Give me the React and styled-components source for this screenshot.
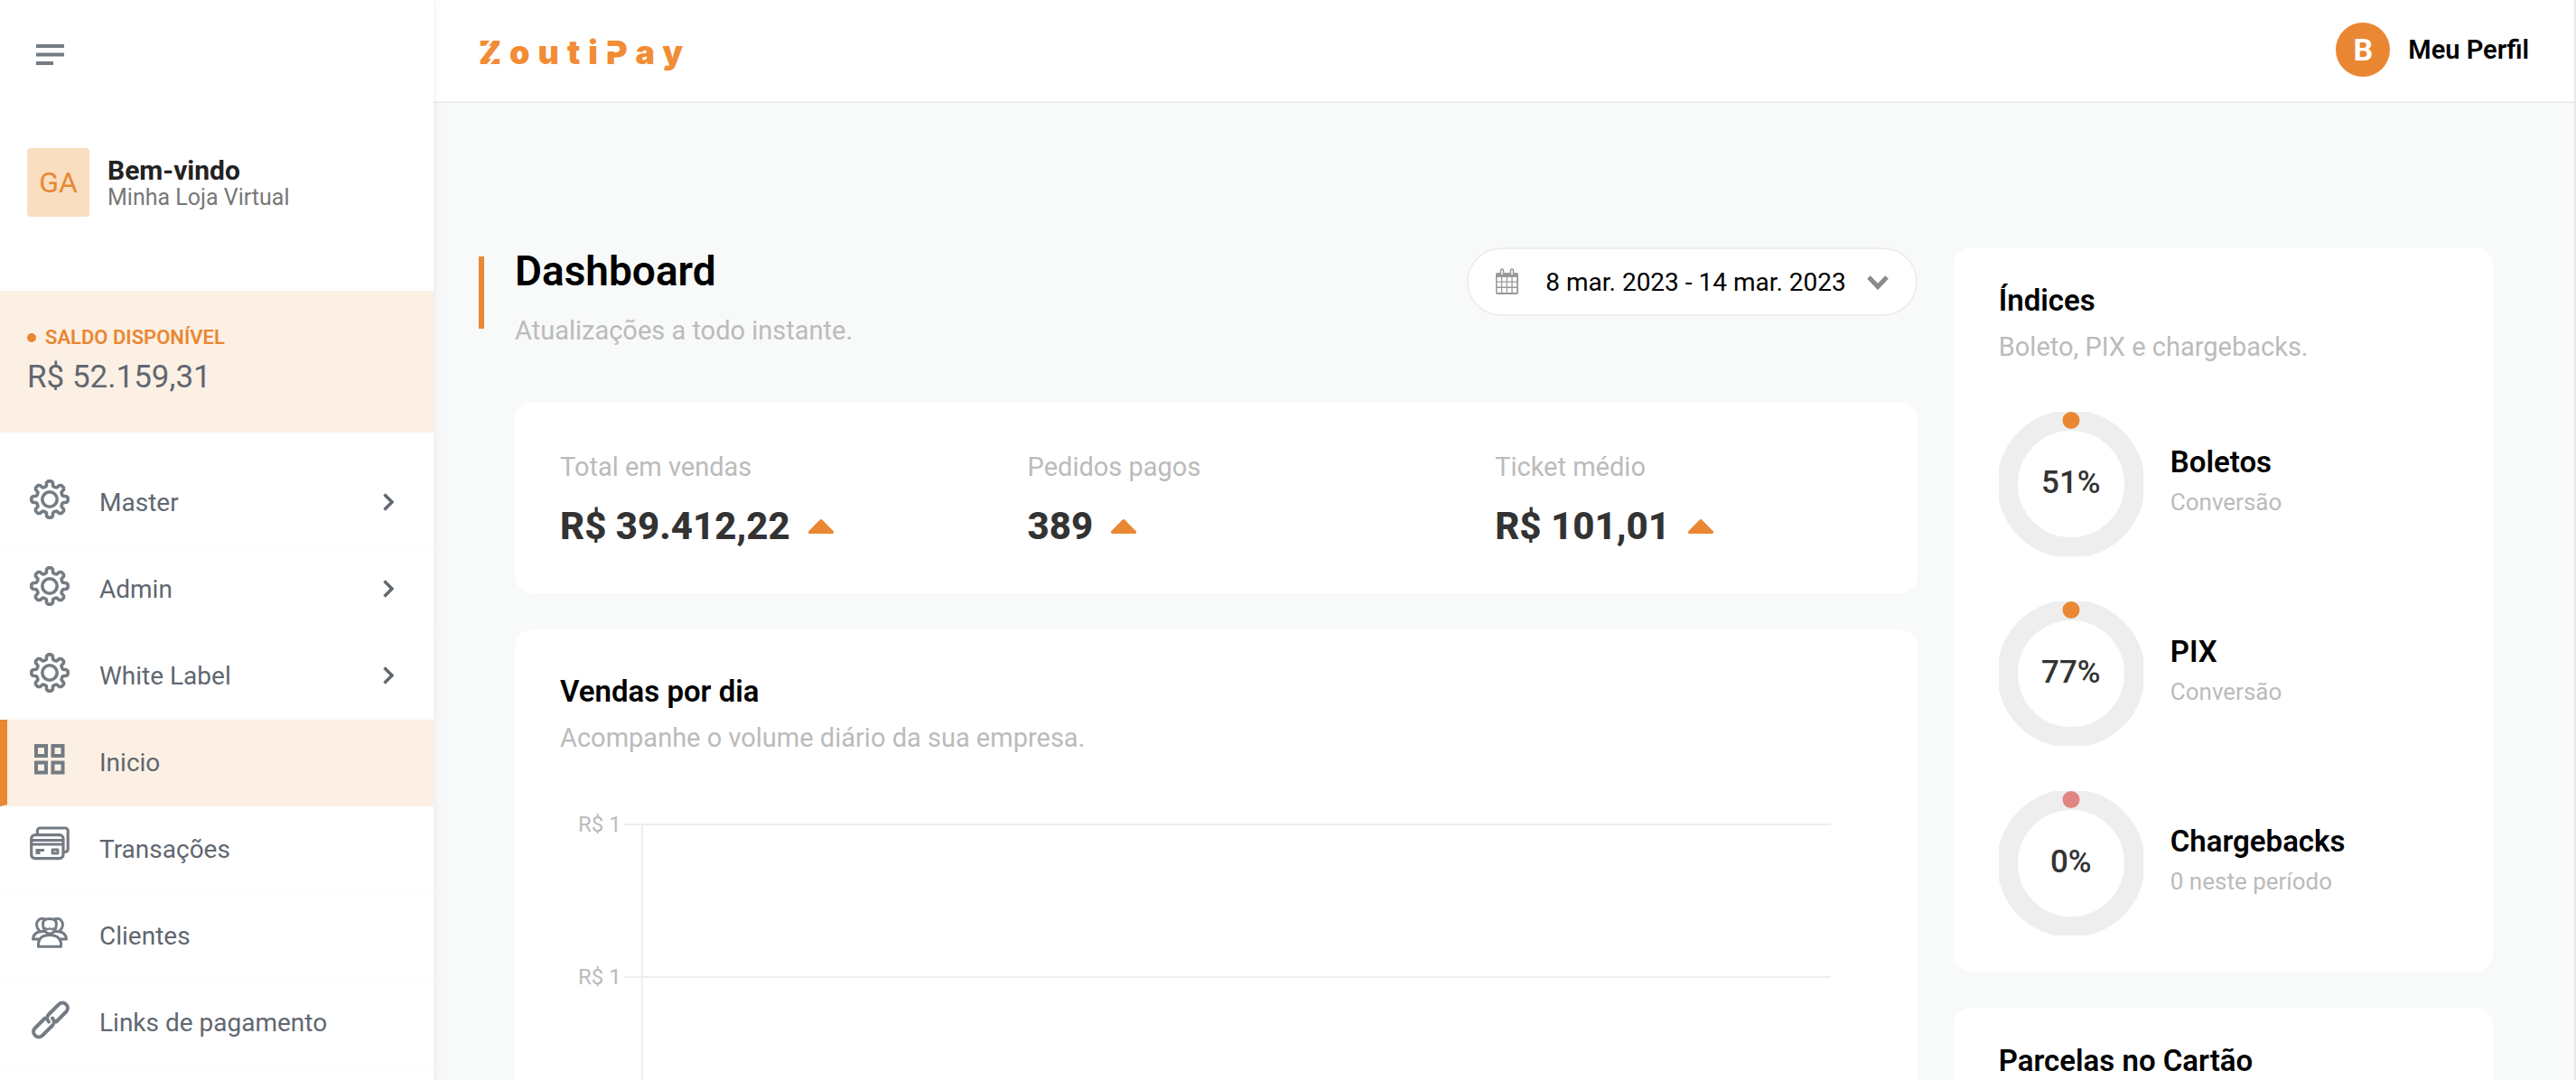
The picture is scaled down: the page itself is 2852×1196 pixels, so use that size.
import React from "react";
import styled, { createGlobalStyle } from "styled-components";

const orange = "#e98733";
const slate = "#606770";
const muted = "#bbbbbb";
const line = "#eeeeee";

const GlobalStyle = createGlobalStyle`
  *, *::before, *::after { box-sizing: border-box; }
  body { margin: 0; background: #f8faf9; color: #000; font-family: Roboto, "Liberation Sans", sans-serif; }
  h1, h2, h3, p, ul, dl, dd { margin: 0; padding: 0; font-weight: 400; }
  ul { list-style: none; }
  a { color: inherit; text-decoration: none; }
  button { font: inherit; color: inherit; border: 0; padding: 0; background: none; cursor: pointer; }
  svg { display: block; flex: none; }
`;

const Shell = styled.div`
  display: grid;
  grid-template-columns: 480px minmax(0, 1fr);
  height: 100vh;
  overflow: hidden;
  border-right: 2px solid #e8e8e8;
`;

/* Sidebar */

const Sidebar = styled.aside`
  z-index: 1;
  background: #fff;
  box-shadow: 0 0 10px rgba(0, 0, 0, 0.08);
`;

const SidebarTop = styled.div`
  display: flex;
  align-items: center;
  height: 120px;
  padding: 0 40px;
`;

const User = styled.div`
  display: flex;
  align-items: center;
  gap: 20px;
  padding: 44px 30px 82px;
`;

const UserBadge = styled.div`
  display: grid;
  place-items: center;
  width: 69px;
  height: 76px;
  border-radius: 4px;
  background: #f9dec1;
  color: ${orange};
  font-size: 32px;
`;

const UserText = styled.div`
  padding-top: 4px;
  line-height: 30px;
`;

const UserGreeting = styled.p`
  color: #222;
  font-size: 30px;
  font-weight: 700;
`;

const UserStore = styled.p`
  color: #777;
  font-size: 25px;
`;

const Balance = styled.div`
  padding: 40px 30px 39px;
  background: #fcf0e4;
`;

const BalanceLabel = styled.p`
  display: flex;
  align-items: center;
  gap: 10px;
  margin-bottom: 10px;
  color: ${orange};
  font-size: 22px;
  font-weight: 600;
  line-height: 24px;

  &::before {
    content: "";
    width: 10px;
    height: 10px;
    border-radius: 50%;
    background: ${orange};
  }
`;

const BalanceValue = styled.p`
  color: ${slate};
  font-size: 35px;
  line-height: 44px;
`;

const Menu = styled.ul`
  padding-top: 30px;
`;

const MenuLink = styled.a`
  display: flex;
  align-items: center;
  height: 96px;
  padding: 0 44px 0 ${(p) => (p.$active ? "25px" : "33px")};
  border-left: ${(p) => (p.$active ? `8px solid ${orange}` : "0")};
  border-bottom: 2px solid ${(p) => (p.$active ? "#fcf0e4" : "#fdfdfd")};
  background: ${(p) => (p.$active ? "#fcf0e4" : "#fff")};
  color: ${slate};
  font-size: 28px;
`;

const MenuIcon = styled.span`
  width: 44px;
  margin-right: 33px;
  padding-bottom: 6px;
  color: #747b83;
`;

const MenuLabel = styled.span`
  flex: 1;
`;

/* Header */

const Page = styled.div`
  display: flex;
  flex-direction: column;
  min-width: 0;
`;

const Header = styled.header`
  display: flex;
  align-items: center;
  justify-content: space-between;
  flex: none;
  height: 114px;
  padding: 0 50px 2px;
  border-bottom: 2px solid ${line};
  background: #fff;
`;

const Logo = styled.a`
  padding-top: 6px;
  color: #f28c35;
  font-family: Inter, sans-serif;
  font-size: 36px;
  font-weight: 900;
  letter-spacing: 9px;
`;

const LogoLetter = styled.span`
  position: relative;

  &::before,
  &::after {
    content: "";
    position: absolute;
    background: #fff;
  }
`;

const LogoZ = styled(LogoLetter)`
  &::before,
  &::after {
    width: 12px;
    height: 3px;
    transform: rotate(-50deg);
  }
  &::before { left: 6px; top: 10px; }
  &::after { left: 7px; bottom: 10px; }
`;

const LogoP = styled(LogoLetter)`
  &::before { left: 0; top: 15px; width: 10px; height: 6px; }
`;

const Profile = styled.a`
  display: flex;
  align-items: center;
  gap: 20px;
  font-size: 29px;
  font-weight: 600;
`;

const ProfileBadge = styled.span`
  display: grid;
  place-items: center;
  width: 60px;
  height: 60px;
  border-radius: 50%;
  background: ${orange};
  color: #fff;
  font-size: 34px;
  font-weight: 700;
`;

/* Content */

const Content = styled.main`
  display: grid;
  grid-template-columns: minmax(0, 13fr) minmax(0, 5fr);
  align-items: start;
  gap: 40px;
  padding: 160px 90px 90px;
`;

const Column = styled.div`
  display: grid;
  gap: 40px;
`;

const Heading = styled.div`
  display: flex;
  align-items: flex-start;
  gap: 34px;
  margin: 0 0 23px -40px;
`;

const HeadingBar = styled.div`
  width: 6px;
  height: 80px;
  margin-top: 10px;
  background: ${orange};
`;

const HeadingText = styled.div`
  display: grid;
  gap: 23px;
  flex: 1;
`;

const Title = styled.h1`
  font-size: 46px;
  font-weight: 600;
  line-height: 52px;
`;

const Subtitle = styled.p`
  color: ${muted};
  font-size: 29px;
  line-height: 34px;
`;

const DateButton = styled.button`
  display: flex;
  align-items: center;
  height: 76px;
  padding: 0 30px;
  border: 2px solid ${line};
  border-radius: 38px;
  background: #fff;
  color: #000;
  font-size: 28px;
`;

const DateText = styled.span`
  padding: 0 23px 0 30px;
`;

const Card = styled.section`
  padding: ${(p) => p.$pad || "40px 50px"};
  border-radius: 20px;
  background: #fff;
`;

const Stats = styled.dl`
  display: grid;
  grid-template-columns: repeat(3, minmax(0, 1fr));
`;

const Stat = styled.div`
  display: grid;
  gap: 24px;
  padding: 0 50px;
`;

const StatLabel = styled.dt`
  color: ${muted};
  font-size: 29px;
  line-height: 34px;
`;

const StatValue = styled.dd`
  display: flex;
  align-items: center;
  gap: 20px;
  color: #333;
  font-size: 42px;
  font-weight: 800;
  line-height: 50px;
`;

const CardHead = styled.div`
  display: grid;
  gap: 15px;
  margin-bottom: ${(p) => p.$gap || "55px"};
`;

const CardTitle = styled.h2`
  font-size: 33px;
  font-weight: 600;
  line-height: 38px;
`;

const Chart = styled.div`
  padding: 14px 46px 0 20px;
`;

const ChartRow = styled.div`
  display: grid;
  grid-template-columns: 48px 22px 1fr;
  height: 169px;
`;

const ChartLabel = styled.span`
  margin-top: -14px;
  color: ${muted};
  font-size: 24px;
  line-height: 30px;
  white-space: nowrap;
`;

const ChartTick = styled.span`
  margin-left: 3px;
  border-top: 2px solid ${line};
`;

const ChartBand = styled.span`
  border-top: 2px solid ${line};
  border-left: 2px solid ${line};
`;

const RateList = styled.ul`
  display: grid;
  gap: 50px;
`;

const RateItem = styled.li`
  display: flex;
  align-items: center;
  gap: 30px;
`;

const RateRing = styled.div`
  display: grid;
  place-items: center;

  > * { grid-area: 1 / 1; }
`;

const RateValue = styled.span`
  padding-bottom: 4px;
  color: #333;
  font-size: 35px;
  font-weight: 500;
`;

const RateText = styled.div`
  display: grid;
  gap: 10px;
  padding-bottom: 8px;
`;

const RateName = styled.h3`
  font-size: 33px;
  font-weight: 600;
  line-height: 38px;
`;

const RateNote = styled.p`
  color: ${muted};
  font-size: 26px;
  line-height: 30px;
`;

/* Icons */

const gearPath = () => {
  const points = [];
  const add = (deg, r) => {
    const a = (deg * Math.PI) / 180;
    points.push(`${(22 + r * Math.cos(a)).toFixed(2)} ${(22 + r * Math.sin(a)).toFixed(2)}`);
  };
  for (let i = 0; i < 8; i += 1) {
    const c = i * 45 - 90;
    add(c - 14, 15.2);
    add(c - 10, 19);
    add(c - 5, 20.2);
    add(c + 5, 20.2);
    add(c + 10, 19);
    add(c + 14, 15.2);
    add(c + 22.5, 14.6);
  }
  return `M${points.join("L")}Z`;
};

const Svg44 = ({ children }) => (
  <svg width="44" height="44" viewBox="0 0 44 44" fill="none" stroke="currentColor" strokeLinejoin="round" strokeLinecap="round" aria-hidden="true">
    {children}
  </svg>
);

const GearIcon = () => (
  <Svg44>
    <path d={gearPath()} strokeWidth="3.6" />
    <circle cx="22" cy="22" r="8.2" strokeWidth="3.6" />
  </Svg44>
);

const GridIcon = () => (
  <Svg44>
    <g strokeWidth="4" strokeLinejoin="miter">
      <rect x="7" y="7" width="11" height="11" />
      <rect x="25.500" y="7" width="11" height="11" />
      <rect x="7" y="25.500" width="11" height="11" />
      <rect x="25.500" y="25.500" width="11" height="11" />
    </g>
  </Svg44>
);

const CardsIcon = () => (
  <Svg44>
    <g strokeWidth="3.2">
      <path d="M8.4 9V5a3 3 0 0 1 3-3H39.2a3 3 0 0 1 3 3V25.500a3 3 0 0 1-3 3H38" />
      <rect x="1.7" y="9.600" width="35.300" height="26" rx="4" />
      <path d="M2 15.500h34.500M2 20h34.500" strokeWidth="2.800" />
      <path d="M6.500 26.500h9.500M6.500 29.500h5" strokeWidth="2.800" strokeLinecap="butt" />
      <rect x="25" y="26" width="6" height="4" strokeWidth="2.800" />
    </g>
  </Svg44>
);

const PeopleIcon = () => (
  <Svg44>
    <g strokeWidth="3">
      <path d="M14.500 12c0-4 3-5.500 7.500-5.500s7.500 1.500 7.500 5.500c0 6-3.500 11-7.500 11s-7.500-5-7.500-11Z" />
      <path d="M18 17c1 1.800 2.500 1.200 4 0 1.500 1.200 3 1.800 4 0" strokeWidth="2.200" />
      <path d="M10 7.500C11.500 6 15 6.300 17 7M10 7.500c-4 4-2.500 9 1 12.500M34 7.500C32.500 6 29 6.300 27 7M34 7.500c4 4 2.500 9-1 12.500" />
      <path d="M16 20.500c-8-.5-12 2-12.500 8.500H10M28 20.500c8-.5 12 2 12.500 8.500H34" />
      <path d="M9.500 37.200v-4c1-6.200 6-8.700 12.500-8.700s11.500 2.500 12.500 8.700v4Z" />
    </g>
  </Svg44>
);

const LinkIcon = () => (
  <Svg44>
    <g strokeWidth="4" transform="rotate(-45 23 22.500)">
      <path d="M20 16.700H4.500a5.800 5.800 0 0 0 0 11.600H20a5.800 5.800 0 0 0 5.800-5.800" />
      <path d="M26 28.300H41.500a5.800 5.800 0 0 0 0-11.600H26a5.800 5.800 0 0 0-5.800 5.800" />
    </g>
  </Svg44>
);

const ChevronRight = () => (
  <svg width="12" height="20" viewBox="0 0 12 20" fill="none" stroke="currentColor" strokeWidth="3.4" aria-hidden="true">
    <path d="M1.500 1.500 10 10l-8.500 8.500" />
  </svg>
);

const ChevronDown = () => (
  <svg width="24" height="17" viewBox="0 0 24 17" fill="none" stroke="#8a8a8a" strokeWidth="5" aria-hidden="true">
    <path d="M2 3l10 10.500L22 3" />
  </svg>
);

const MenuLines = () => (
  <svg width="31" height="24" viewBox="0 0 31 24" fill="none" stroke="#747b83" strokeWidth="4" aria-hidden="true">
    <path d="M0 3h31M0 12.500h31M0 22h19" />
  </svg>
);

const CalendarIcon = () => (
  <svg width="25" height="30" viewBox="0 0 25 30" fill="none" aria-hidden="true">
    <path d="M2 5h21a2 2 0 0 1 2 2v20a2 2 0 0 1-2 2H2a2 2 0 0 1-2-2V7a2 2 0 0 1 2-2Z" fill="#999" />
    <path
      fill="#fff"
      d="M1.500 10h4.500v4.500H1.500zM7.200 10h4.500v4.500H7.200zM12.900 10h4.500v4.500h-4.500zM18.700 10h4.500v4.500h-4.500zM1.500 15.800h4.500v4.800H1.500zM7.200 15.800h4.500v4.800H7.200zM12.900 15.800h4.500v4.800h-4.500zM18.700 15.800h4.500v4.800h-4.500zM1.500 22h4.500v5H1.500zM7.200 22h4.500v5H7.200zM12.900 22h4.500v5h-4.500zM18.700 22h4.500v5h-4.500z"
    />
    <rect x="5.500" y="1" width="3" height="7" rx="1.500" fill="#fff" stroke="#999" strokeWidth="1.500" />
    <rect x="16.500" y="1" width="3" height="7" rx="1.500" fill="#fff" stroke="#999" strokeWidth="1.500" />
  </svg>
);

const UpTriangle = () => (
  <svg width="28" height="16" viewBox="0 0 28 16" aria-hidden="true">
    <path d="M12.800.6a1.800 1.800 0 0 1 2.400 0l12.300 12.400c1 1.200.6 3-1.300 3H1.800C-.1 16-.5 14.200.5 13Z" fill={orange} />
  </svg>
);

const Ring = ({ color }) => (
  <svg width="160" height="160" viewBox="0 0 160 160" aria-hidden="true">
    <circle cx="80" cy="80" r="70.500" fill="none" stroke={line} strokeWidth="23" />
    <circle cx="80" cy="9.500" r="9.500" fill={color} />
  </svg>
);

/* Data */

const menu = [
  { label: "Master", Icon: GearIcon, nested: true },
  { label: "Admin", Icon: GearIcon, nested: true },
  { label: "White Label", Icon: GearIcon, nested: true },
  { label: "Inicio", Icon: GridIcon, active: true },
  { label: "Transações", Icon: CardsIcon },
  { label: "Clientes", Icon: PeopleIcon },
  { label: "Links de pagamento", Icon: LinkIcon },
];

const stats = [
  { label: "Total em vendas", value: "R$ 39.412,22" },
  { label: "Pedidos pagos", value: "389" },
  { label: "Ticket médio", value: "R$ 101,01" },
];

const rates = [
  { name: "Boletos", value: "51%", note: "Conversão", color: orange },
  { name: "PIX", value: "77%", note: "Conversão", color: orange },
  { name: "Chargebacks", value: "0%", note: "0 neste período", color: "#e08582" },
];

const ticks = ["R$ 1", "R$ 1"];

export default function App() {
  return (
    <>
      <GlobalStyle />
      <Shell>
        <Sidebar>
          <SidebarTop>
            <button type="button" aria-label="Menu">
              <MenuLines />
            </button>
          </SidebarTop>
          <User>
            <UserBadge>GA</UserBadge>
            <UserText>
              <UserGreeting>Bem-vindo</UserGreeting>
              <UserStore>Minha Loja Virtual</UserStore>
            </UserText>
          </User>
          <Balance>
            <BalanceLabel>SALDO DISPONÍVEL</BalanceLabel>
            <BalanceValue>R$ 52.159,31</BalanceValue>
          </Balance>
          <nav>
            <Menu>
              {menu.map(({ label, Icon, nested, active }) => (
                <li key={label}>
                  <MenuLink href="#" $active={active} aria-current={active ? "page" : undefined}>
                    <MenuIcon>
                      <Icon />
                    </MenuIcon>
                    <MenuLabel>{label}</MenuLabel>
                    {nested && <ChevronRight />}
                  </MenuLink>
                </li>
              ))}
            </Menu>
          </nav>
        </Sidebar>

        <Page>
          <Header>
            <Logo href="#">
              <LogoZ>Z</LogoZ>outi<LogoP>P</LogoP>ay
            </Logo>
            <Profile href="#">
              <ProfileBadge>B</ProfileBadge>
              Meu Perfil
            </Profile>
          </Header>

          <Content>
            <Column>
              <Heading>
                <HeadingBar />
                <HeadingText>
                  <Title>Dashboard</Title>
                  <Subtitle>Atualizações a todo instante.</Subtitle>
                </HeadingText>
                <DateButton type="button">
                  <CalendarIcon />
                  <DateText>8 mar. 2023 - 14 mar. 2023</DateText>
                  <ChevronDown />
                </DateButton>
              </Heading>

              <Card $pad="54px 0 49px">
                <Stats>
                  {stats.map((stat) => (
                    <Stat key={stat.label}>
                      <StatLabel>{stat.label}</StatLabel>
                      <StatValue>
                        {stat.value}
                        <UpTriangle />
                      </StatValue>
                    </Stat>
                  ))}
                </Stats>
              </Card>

              <Card $pad="50px">
                <CardHead $gap="64px">
                  <CardTitle>Vendas por dia</CardTitle>
                  <Subtitle>Acompanhe o volume diário da sua empresa.</Subtitle>
                </CardHead>
                <Chart>
                  {ticks.map((tick, i) => (
                    <ChartRow key={i}>
                      <ChartLabel>{tick}</ChartLabel>
                      <ChartTick />
                      <ChartBand />
                    </ChartRow>
                  ))}
                </Chart>
              </Card>
            </Column>

            <Column>
              <Card>
                <CardHead>
                  <CardTitle>Índices</CardTitle>
                  <Subtitle>Boleto, PIX e chargebacks.</Subtitle>
                </CardHead>
                <RateList>
                  {rates.map((rate) => (
                    <RateItem key={rate.name}>
                      <RateRing>
                        <Ring color={rate.color} />
                        <RateValue>{rate.value}</RateValue>
                      </RateRing>
                      <RateText>
                        <RateName>{rate.name}</RateName>
                        <RateNote>{rate.note}</RateNote>
                      </RateText>
                    </RateItem>
                  ))}
                </RateList>
              </Card>
              <Card>
                <CardTitle>Parcelas no Cartão</CardTitle>
              </Card>
            </Column>
          </Content>
        </Page>
      </Shell>
    </>
  );
}
